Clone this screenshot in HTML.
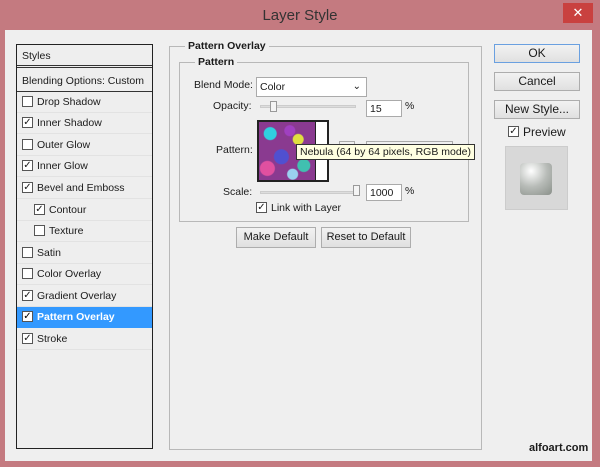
<!DOCTYPE html>
<html><head><style>
*{margin:0;padding:0;box-sizing:border-box}
body{width:600px;height:467px;background:#c47a80;font-family:"Liberation Sans",sans-serif;font-size:10.5px;color:#1a1a1a;position:relative;overflow:hidden}
.a{position:absolute}
.title{left:0;top:0;width:600px;height:30px;text-align:center;line-height:32px;font-size:15px;color:#333}
.close{left:563px;top:3px;width:30px;height:20px;background:#c9413f;color:#fff;text-align:center;line-height:20px;font-size:13px}
.dlg{left:5px;top:30px;width:587px;height:431px;background:#efefef}
.list{left:16px;top:44px;width:137px;height:405px;border:1px solid #222;background:#eeeeee}
.row{position:absolute;left:0;width:135px;height:21px;line-height:21px;border-bottom:1px solid #e2e2e2;padding-left:5px;white-space:nowrap}
.cb{display:inline-block;width:11px;height:11px;border:1px solid #555;background:#fff;vertical-align:middle;margin-top:-2px;margin-right:4px;position:relative;font-size:10px;line-height:9px;text-align:center;font-weight:normal}
.btn{position:absolute;border:1px solid #adadad;background:linear-gradient(#f2f2f2,#e0e0e0);text-align:center;font-size:12px}
.grp{border:1px solid #b8b8b8}
.inp{position:absolute;background:#fff;border:1px solid #aaa;padding-left:3px;line-height:16px}
</style></head><body>
<div class="a title">Layer Style</div>
<div class="a close">✕</div>
<div class="a dlg"></div>
<div class="a list">
<div class="row" style="top:0;height:23px;line-height:23px;border-bottom:3px double #333">Styles</div>
<div class="row" style="top:25px;height:22px;line-height:22px;border-bottom:1px solid #333">Blending Options: Custom</div>
<div class="row" style="top:47px"><span class="cb"></span>Drop Shadow</div>
<div class="row" style="top:68px"><span class="cb">✓</span>Inner Shadow</div>
<div class="row" style="top:90px"><span class="cb"></span>Outer Glow</div>
<div class="row" style="top:111px"><span class="cb">✓</span>Inner Glow</div>
<div class="row" style="top:133px"><span class="cb">✓</span>Bevel and Emboss</div>
<div class="row" style="top:155px;padding-left:17px"><span class="cb">✓</span>Contour</div>
<div class="row" style="top:176px;padding-left:17px"><span class="cb"></span>Texture</div>
<div class="row" style="top:198px"><span class="cb"></span>Satin</div>
<div class="row" style="top:219px"><span class="cb"></span>Color Overlay</div>
<div class="row" style="top:241px"><span class="cb">✓</span>Gradient Overlay</div>
<div class="row" style="top:262px;background:#3399ff;color:#fff;font-weight:bold;border:0"><span class="cb" style="color:#000">✓</span>Pattern Overlay</div>
<div class="row" style="top:284px"><span class="cb">✓</span>Stroke</div>
</div>
<div class="a grp" style="left:169px;top:46px;width:313px;height:404px"></div>
<div class="a" style="left:185px;top:40px;background:#efefef;padding:0 3px;font-weight:bold">Pattern Overlay</div>
<div class="a grp" style="left:179px;top:62px;width:290px;height:160px"></div>
<div class="a" style="left:195px;top:56px;background:#efefef;padding:0 3px;font-weight:bold">Pattern</div>
<div class="a" style="left:194px;top:79px">Blend Mode:</div>
<div class="inp" style="left:256px;top:77px;width:111px;height:20px;line-height:18px">Color<span style="position:absolute;right:5px;font-size:10px">⌄</span></div>
<div class="a" style="left:213px;top:100px">Opacity:</div>
<div class="a" style="left:260px;top:105px;width:96px;height:3px;background:#ddd;border:1px solid #ccc"></div>
<div class="a" style="left:270px;top:101px;width:7px;height:11px;background:#f4f4f4;border:1px solid #999"></div>
<div class="inp" style="left:366px;top:100px;width:36px;height:17px">15</div>
<div class="a" style="left:405px;top:100px">%</div>
<div class="a" style="left:216px;top:144px">Pattern:</div>
<div class="a" style="left:257px;top:120px;width:72px;height:62px;border:2px solid #222;background:#fff"></div>
<div class="a" style="left:259px;top:122px;width:57px;height:58px;border-right:1px solid #222;background:
radial-gradient(circle at 20% 20%,#30d0e0 0 6px,transparent 7px),
radial-gradient(circle at 70% 30%,#e0e040 0 5px,transparent 6px),
radial-gradient(circle at 40% 60%,#5050d0 0 7px,transparent 8px),
radial-gradient(circle at 80% 75%,#40c0b0 0 6px,transparent 7px),
radial-gradient(circle at 15% 80%,#e050a0 0 7px,transparent 8px),
radial-gradient(circle at 55% 15%,#a040c0 0 5px,transparent 6px),
radial-gradient(circle at 60% 90%,#9ad0f0 0 5px,transparent 6px),
#8a3a90"></div>
<div class="a" style="left:339px;top:141px;width:16px;height:10px;border:1px solid #aaa"></div>
<div class="a" style="left:366px;top:141px;width:87px;height:10px;border:1px solid #aaa"></div>
<div class="a" style="left:296px;top:144px;background:#ffffe1;border:1px solid #333;padding:1px 3px;white-space:nowrap">Nebula (64 by 64 pixels, RGB mode)</div>
<div class="a" style="left:223px;top:186px">Scale:</div>
<div class="a" style="left:260px;top:191px;width:96px;height:3px;background:#ddd;border:1px solid #ccc"></div>
<div class="a" style="left:353px;top:185px;width:7px;height:11px;background:#f4f4f4;border:1px solid #999"></div>
<div class="inp" style="left:366px;top:184px;width:36px;height:17px">1000</div>
<div class="a" style="left:405px;top:185px">%</div>
<div class="a" style="left:256px;top:202px"><span class="cb">✓</span>Link with Layer</div>
<div class="btn" style="left:236px;top:227px;width:80px;height:21px;line-height:19px;font-size:11px">Make Default</div>
<div class="btn" style="left:321px;top:227px;width:90px;height:21px;line-height:19px;font-size:11px">Reset to Default</div>
<div class="btn" style="left:494px;top:44px;width:86px;height:19px;line-height:17px;border-color:#6aa0e0">OK</div>
<div class="btn" style="left:494px;top:72px;width:86px;height:19px;line-height:17px">Cancel</div>
<div class="btn" style="left:494px;top:100px;width:86px;height:19px;line-height:17px">New Style...</div>
<div class="a" style="left:508px;top:125px;font-size:12px"><span class="cb">✓</span>Preview</div>
<div class="a" style="left:505px;top:146px;width:63px;height:64px;background:#d8d8d8;border:1px solid #ccc"></div>
<div class="a" style="left:520px;top:163px;width:32px;height:32px;border-radius:4px;background:radial-gradient(circle at 35% 25%,#fff,#b8bcb8 50%,#8a908a)"></div>
<div class="a" style="left:529px;top:442px;font-weight:bold;font-size:11px">alfoart.com</div>
</body></html>
